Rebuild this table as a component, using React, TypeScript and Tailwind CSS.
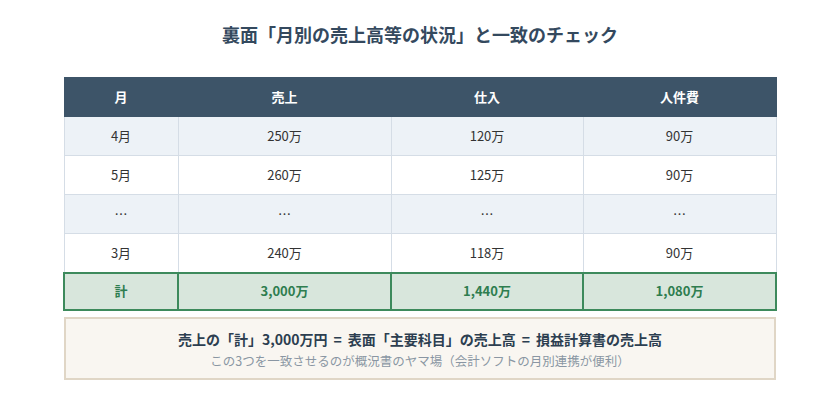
import React from "react";

const rows = [
  ["4月", "250万", "120万", "90万"],
  ["5月", "260万", "125万", "90万"],
  ["…", "…", "…", "…"],
  ["3月", "240万", "118万", "90万"],
];

export default function App() {
  return (
    <div
      className="w-[840px] h-[411px] bg-white flex flex-col items-center"
      style={{ fontFamily: '"Noto Sans CJK JP", "Noto Sans", sans-serif' }}
    >
      <h1 className="mt-[21px] h-[26px] leading-[26px] text-[18px] font-bold text-[#34495e]">
        裏面「月別の売上高等の状況」と一致のチェック
      </h1>
      <table className="mt-[30px] w-[712px] table-fixed border-collapse text-[13px] text-[#333]">
        <colgroup>
          <col className="w-[114px]" />
          <col className="w-[213px]" />
          <col className="w-[192px]" />
          <col className="w-[193px]" />
        </colgroup>
        <thead>
          <tr className="bg-[#3d5468] text-white h-[39px]">
            {["月", "売上", "仕入", "人件費"].map((h) => (
              <th key={h} className="font-bold text-center border border-[#3d5468] p-0">
                {h}
              </th>
            ))}
          </tr>
        </thead>
        <tbody>
          {rows.map((r, i) => (
            <tr key={i} className={`h-[39px] ${i % 2 === 0 ? "bg-[#edf2f7]" : "bg-white"}`}>
              {r.map((c, j) => (
                <td key={j} className="text-center border border-[#d5dde6] p-0">
                  {c}
                </td>
              ))}
            </tr>
          ))}
          <tr className="h-[37px] bg-[#d8e6dc] text-[#2e7d4f] font-bold">
            {["計", "3,000万", "1,440万", "1,080万"].map((c, j) => (
              <td key={j} className="text-center border-2 border-[#3d8a5c] p-0">
                {c}
              </td>
            ))}
          </tr>
        </tbody>
      </table>
      <div className="mt-[6px] w-[712px] h-[63px] border-2 border-[#e0d6c6] bg-[#f9f6f1] flex flex-col items-center justify-center pt-[3px]">
        <div className="text-[14px] font-bold text-[#2c3e50] leading-[20px]">
          売上の「計」3,000万円<span className="mx-[6px]">=</span>表面「主要科目」の売上高<span className="mx-[6px]">=</span>損益計算書の売上高
        </div>
        <div className="text-[12.5px] text-[#8a96a3] leading-[18px] mt-[3px]">
          この3つを一致させるのが概況書のヤマ場（会計ソフトの月別連携が便利）
        </div>
      </div>
    </div>
  );
}
